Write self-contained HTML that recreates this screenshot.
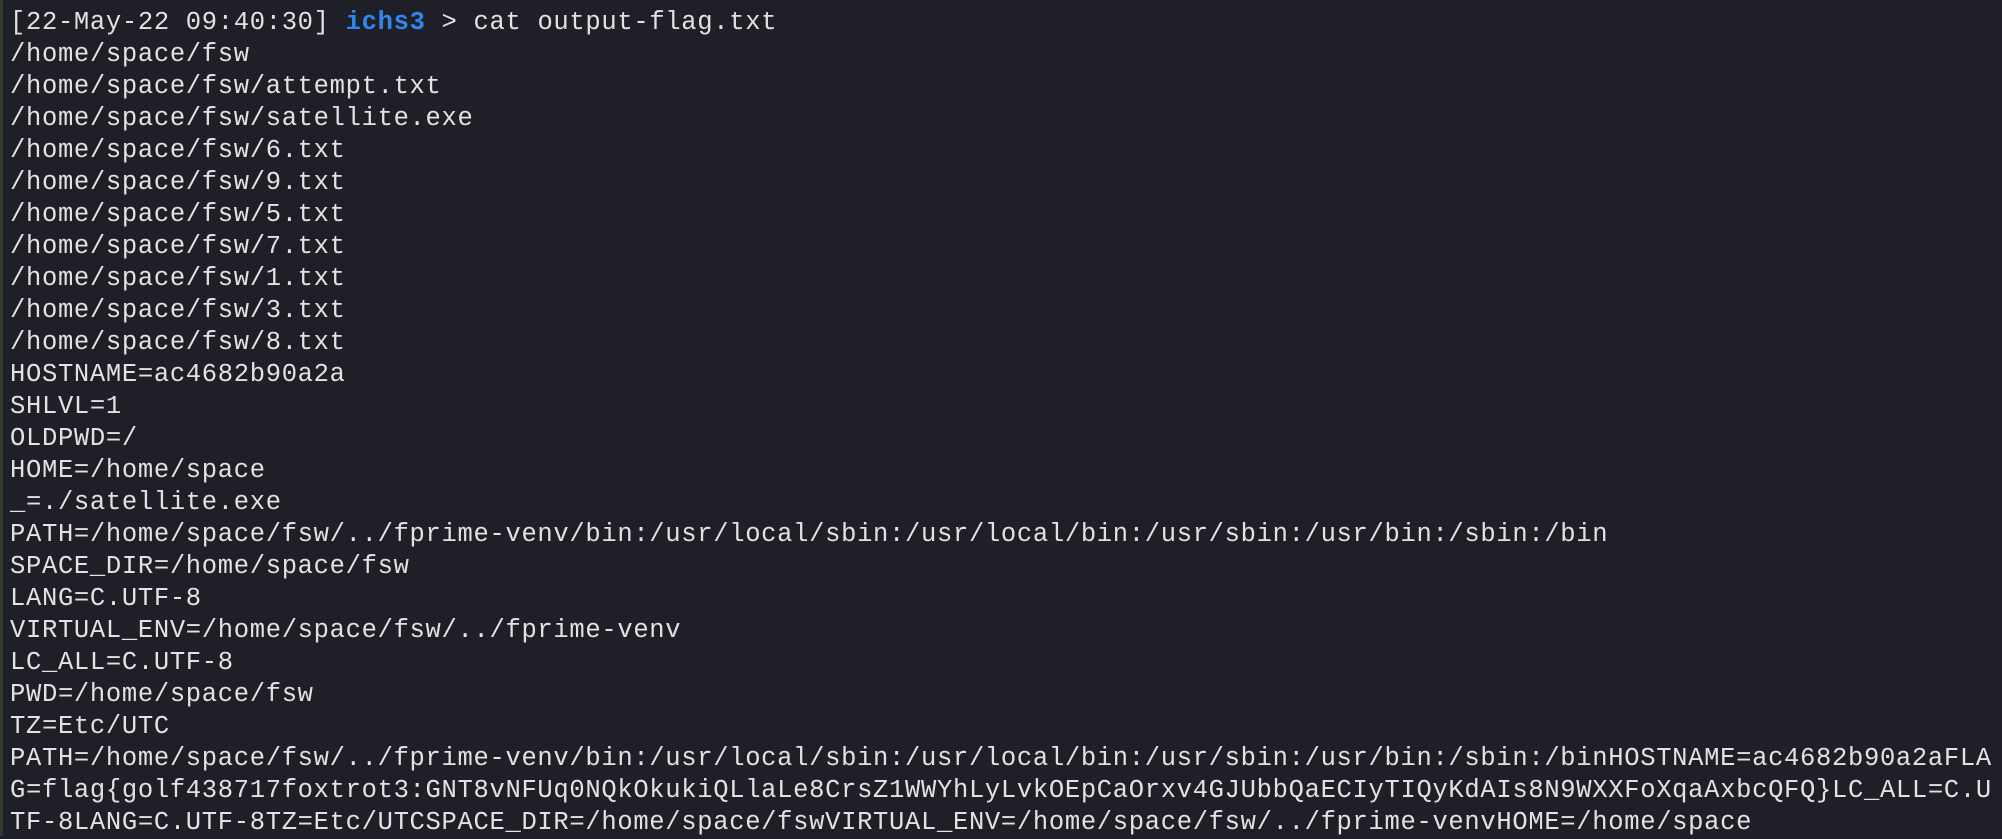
<!DOCTYPE html>
<html><head><meta charset="utf-8"><style>
html,body{margin:0;padding:0;}
body{width:2002px;height:836px;background:#1f2027;overflow:hidden;position:relative;}
.bar{position:absolute;left:0;top:0;width:3px;height:836px;background:#2f3a2a;}
pre{margin:0;position:absolute;left:10px;top:7px;font-family:"Liberation Mono",monospace;font-size:25.5px;letter-spacing:0.68px;line-height:32px;color:#e2e2e2;}
.b{color:#2f86f0;font-weight:bold;}
</style></head><body><div class="bar"></div><pre>[22-May-22 09:40:30] <span class="b">ichs3</span> &gt; cat output-flag.txt
/home/space/fsw
/home/space/fsw/attempt.txt
/home/space/fsw/satellite.exe
/home/space/fsw/6.txt
/home/space/fsw/9.txt
/home/space/fsw/5.txt
/home/space/fsw/7.txt
/home/space/fsw/1.txt
/home/space/fsw/3.txt
/home/space/fsw/8.txt
HOSTNAME=ac4682b90a2a
SHLVL=1
OLDPWD=/
HOME=/home/space
_=./satellite.exe
PATH=/home/space/fsw/../fprime-venv/bin:/usr/local/sbin:/usr/local/bin:/usr/sbin:/usr/bin:/sbin:/bin
SPACE_DIR=/home/space/fsw
LANG=C.UTF-8
VIRTUAL_ENV=/home/space/fsw/../fprime-venv
LC_ALL=C.UTF-8
PWD=/home/space/fsw
TZ=Etc/UTC
PATH=/home/space/fsw/../fprime-venv/bin:/usr/local/sbin:/usr/local/bin:/usr/sbin:/usr/bin:/sbin:/binHOSTNAME=ac4682b90a2aFLA
G=flag{golf438717foxtrot3:GNT8vNFUq0NQkOkukiQLlaLe8CrsZ1WWYhLyLvkOEpCaOrxv4GJUbbQaECIyTIQyKdAIs8N9WXXFoXqaAxbcQFQ}LC_ALL=C.U
TF-8LANG=C.UTF-8TZ=Etc/UTCSPACE_DIR=/home/space/fswVIRTUAL_ENV=/home/space/fsw/../fprime-venvHOME=/home/space</pre></body></html>
